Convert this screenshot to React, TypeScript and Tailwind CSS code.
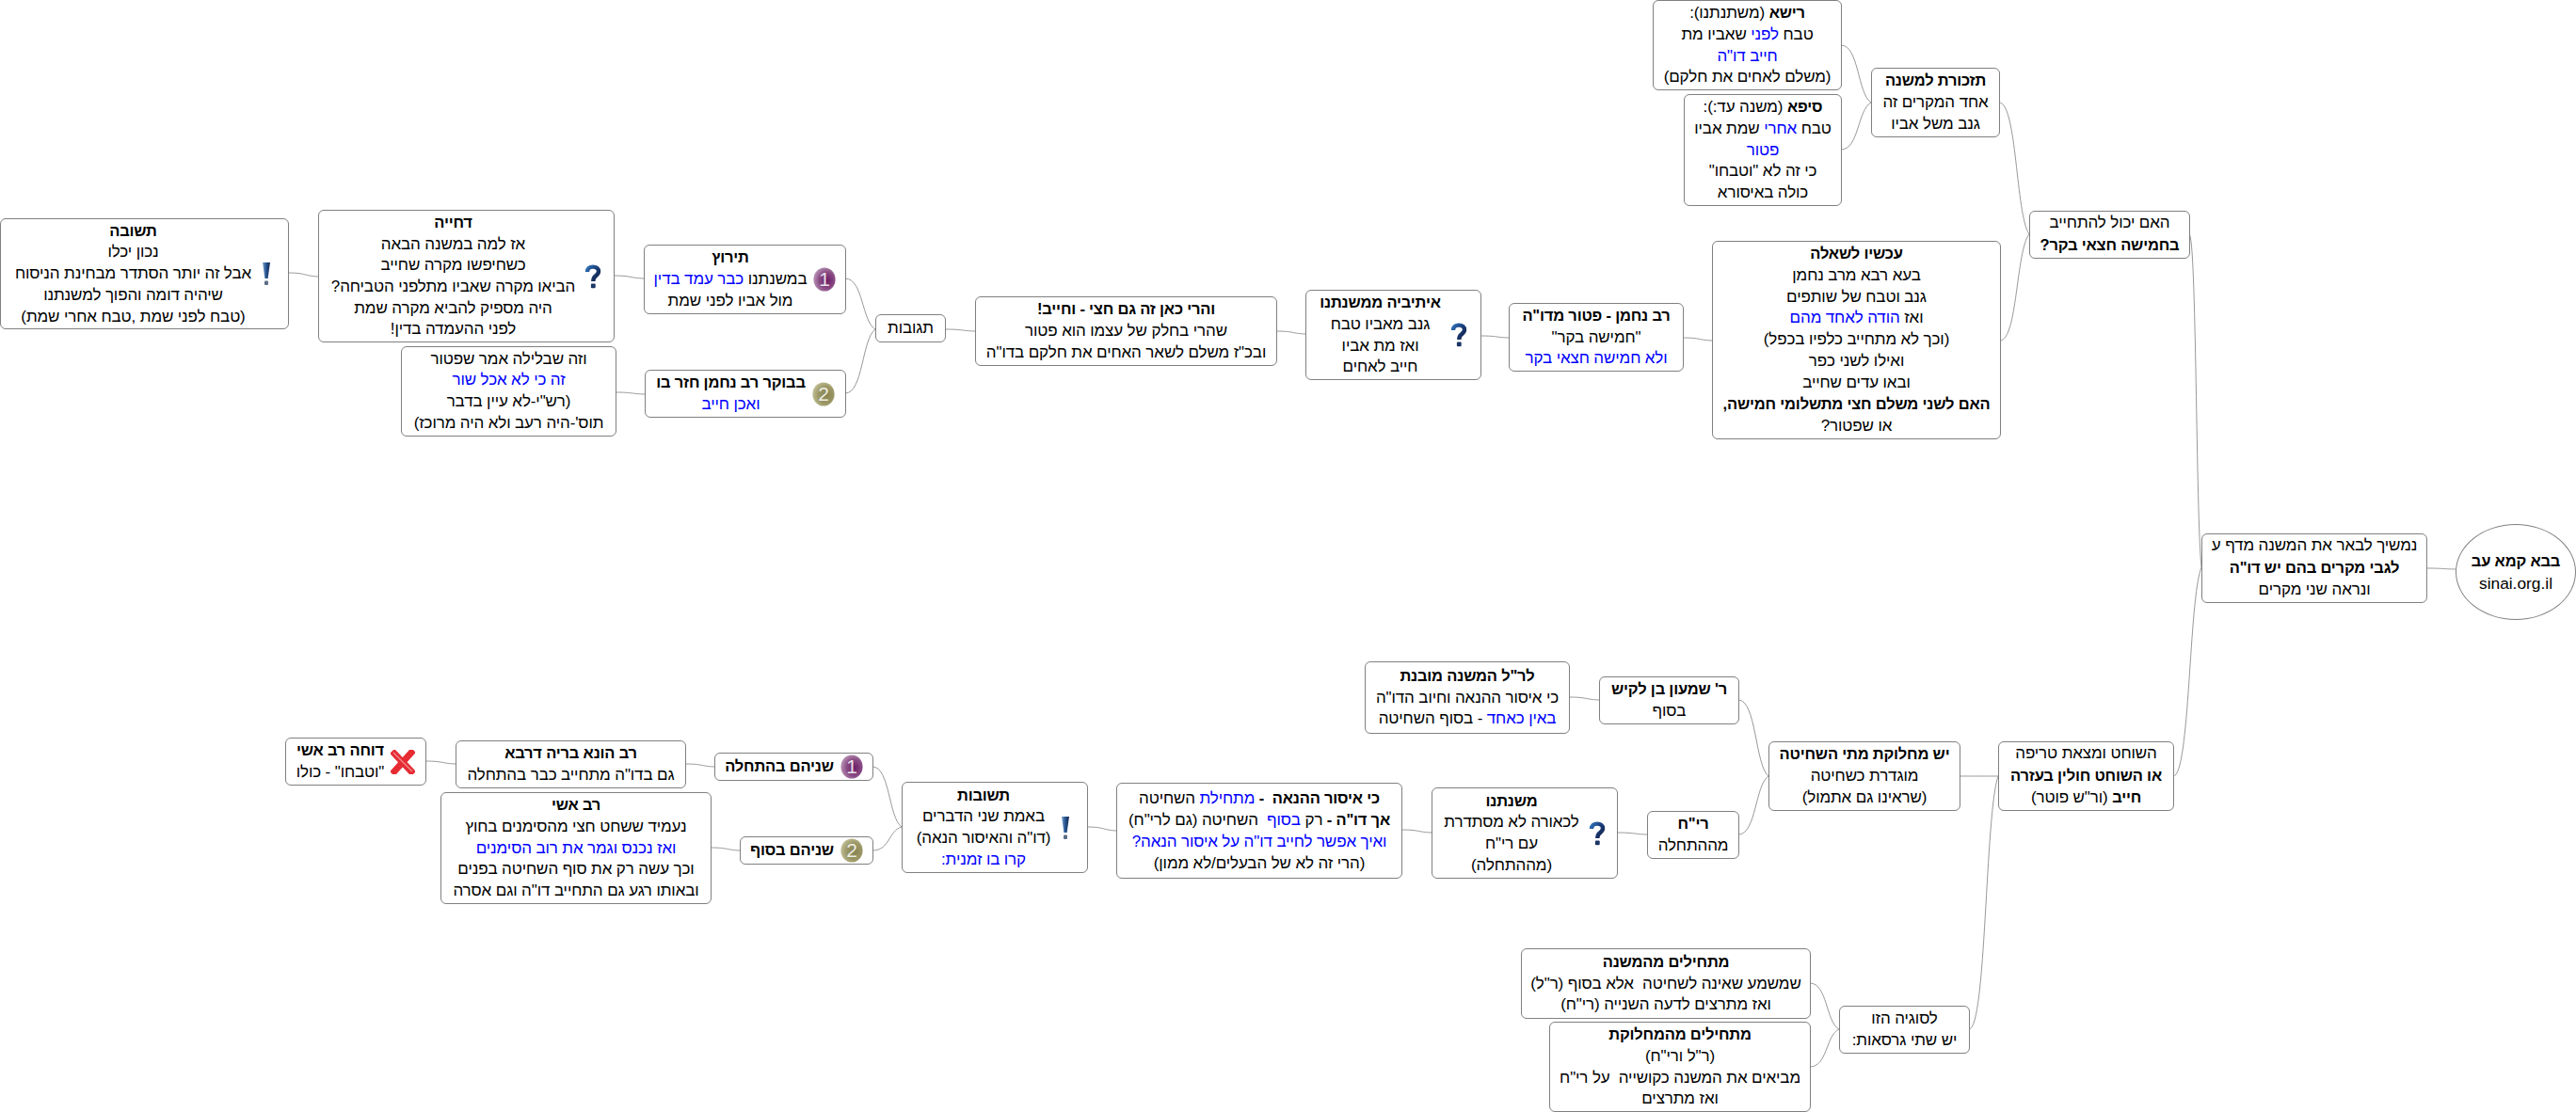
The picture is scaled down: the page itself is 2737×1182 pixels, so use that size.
import React from "react";

const B = ({ children }: { children: React.ReactNode }) => <span className="text-[16.5px] font-bold tracking-[-0.2px]">{children}</span>;
const U = ({ children }: { children: React.ReactNode }) => <span className="text-[#0000ff]">{children}</span>;

function Question() {
  return (
    <svg width="18" height="26" viewBox="0 0 18 26" className="ml-[3px] shrink-0">
      <defs>
        <linearGradient id="qg" x1="0" y1="0" x2="1" y2="1">
          <stop offset="0" stopColor="#2f6fb5" />
          <stop offset="0.45" stopColor="#1c3f7c" />
          <stop offset="1" stopColor="#101f45" />
        </linearGradient>
      </defs>
      <path d="M3 8C3 4.4 5.6 2.6 9 2.6C12.6 2.6 15 4.6 15 7.6C15 10.2 13.2 11.3 11.4 12.8C9.9 14 9.3 15 9.3 18" fill="none" stroke="url(#qg)" strokeWidth="4.4" />
      <rect x="6.9" y="20.4" width="4.8" height="4.8" rx="1" fill="#1b3566" />
    </svg>
  );
}

function Exclaim() {
  return (
    <svg width="10" height="26" viewBox="0 0 10 26" className="ml-[4px] mr-[3px] shrink-0">
      <defs>
        <linearGradient id="eg" x1="0" y1="0" x2="1" y2="0">
          <stop offset="0" stopColor="#7fa6cf" />
          <stop offset="0.5" stopColor="#24508f" />
          <stop offset="1" stopColor="#16294f" />
        </linearGradient>
      </defs>
      <path d="M1 1H9L6.6 18H3.4Z" fill="url(#eg)" />
      <rect x="3" y="20.5" width="4" height="4.5" rx="1" fill="#5c6d85" />
    </svg>
  );
}

function Badge({ n }: { n: 1 | 2 }) {
  const id = n === 1 ? "b1" : "b2";
  const c = n === 1 ? ["#6c1c66", "#8a4d85", "#b48cb0"] : ["#87834f", "#9b9767", "#bdbb90"];
  return (
    <svg width="24" height="26" viewBox="0 0 24 26" className="shrink-0">
      <defs>
        <radialGradient id={id} cx="0.62" cy="0.55" r="0.6">
          <stop offset="0" stopColor={c[0]} />
          <stop offset="0.6" stopColor={c[1]} />
          <stop offset="1" stopColor={c[2]} />
        </radialGradient>
      </defs>
      <ellipse cx="12" cy="13" rx="11.6" ry="12.6" fill={`url(#${id})`} />
      <text x="12" y="20" textAnchor="middle" fontSize="21" fontFamily="'Liberation Sans', sans-serif" fill="#ffffff" fillOpacity="0.85">{n}</text>
    </svg>
  );
}

function Cross() {
  return (
    <svg width="26" height="26" viewBox="0 0 26 26" className="shrink-0">
      <path d="M4 4L22 23M22 3L4 23" stroke="#e62b33" strokeWidth="7" strokeLinecap="square" />
      <path d="M3 3L23 23" stroke="#f48b90" strokeWidth="1.2" />
    </svg>
  );
}

type NodeProps = { className: string; icon?: React.ReactNode; lines: React.ReactNode[] };

function MapNode({ className, icon, lines }: NodeProps) {
  return (
    <div dir="rtl" className={"absolute flex items-center justify-center gap-[7px] rounded-[6px] border border-[#808080] bg-white " + className}>
      {icon}
      <div className="flex flex-col items-center">
        {lines.map((l, i) => (
          <div key={i} className="whitespace-pre text-center">{l}</div>
        ))}
      </div>
    </div>
  );
}

const links: [number, number, number, number][] = [
  [2578, 604, 2609, 605],
  [2326, 249, 2339, 603],
  [2309, 825, 2339, 603],
  [2124, 109, 2156, 249],
  [2125, 362, 2156, 249],
  [1956, 48, 1988, 109],
  [1956, 159, 1988, 109],
  [1788, 359, 1819, 362],
  [1573, 357, 1603, 359],
  [1356, 352, 1387, 355],
  [1004, 350, 1036, 352],
  [898, 296, 930, 350],
  [898, 418, 930, 350],
  [652, 293, 684, 296],
  [306, 290, 338, 294],
  [654, 417, 685, 419],
  [2082, 825, 2123, 825],
  [2092, 1094, 2123, 825],
  [1847, 744, 1879, 825],
  [1847, 887, 1879, 825],
  [1667, 741, 1699, 744],
  [1718, 885, 1750, 887],
  [1489, 882, 1521, 885],
  [1155, 879, 1186, 883],
  [927, 815, 958, 879],
  [927, 904, 958, 879],
  [728, 812, 759, 815],
  [755, 901, 786, 904],
  [452, 809, 484, 812],
  [1923, 1045, 1954, 1094],
  [1923, 1134, 1954, 1094],
];

function curve([x1, y1, x2, y2]: [number, number, number, number]) {
  const dx = x2 - x1;
  const dy = y2 - y1;
  return `M${x1} ${y1}C${x1 + dx * 0.6} ${y1} ${x1 + dx * 0.55} ${y1 + dy * 0.85} ${x2} ${y2}`;
}

export default function App() {
  return (
    <div className="relative h-[1182px] w-[2737px] overflow-hidden bg-white font-['Liberation_Sans',Arial,sans-serif] text-[17px] leading-[22.67px] tracking-[-0.12px] text-black">
      <svg className="absolute left-0 top-0" width="2737" height="1182" fill="none">
        {links.map((l, i) => (
          <path key={i} d={curve(l)} stroke="#999999" strokeWidth="1" />
        ))}
      </svg>

      <div className="absolute left-[2609px] top-[557px] flex h-[102px] w-[128px] flex-col items-center justify-center rounded-[50%] border border-[#808080] bg-white">
        <div dir="rtl"><B>בבא קמא עב</B></div>
        <div className="text-[17.33px] tracking-normal">sinai.org.il</div>
      </div>

      <MapNode className="left-[2339px] top-[567px] h-[74px] w-[240px]" lines={["נמשיך לבאר את המשנה מדף ע", <B>לגבי מקרים בהם יש דו"ה</B>, "ונראה שני מקרים"]} />
      <MapNode className="left-[2156px] top-[224px] h-[51px] w-[171px]" lines={["האם יכול להתחייב", <B>בחמישה חצאי בקר?</B>]} />
      <MapNode className="left-[1988px] top-[72px] h-[74px] w-[137px]" lines={[<B>תזכורת למשנה</B>, "אחד המקרים זה", "גנב משל אביו"]} />
      <MapNode className="left-[1756px] top-0 h-[96px] w-[201px]" lines={[<><B>רישא</B> (משתנתנו):</>, <>טבח <U>לפני</U> שאביו מת</>, <U>חייב דו"ה</U>, "(משלם לאחים את חלקם)"]} />
      <MapNode className="left-[1789px] top-[100px] h-[119px] w-[168px]" lines={[<><B>סיפא</B> (משנה עד:):</>, <>טבח <U>אחרי</U> שמת אביו</>, <U>פטור</U>, 'כי זה לא "וטבחו"', "כולה באיסורא"]} />
      <MapNode className="left-[1819px] top-[256px] h-[211px] w-[307px]" lines={[<B>עכשיו לשאלה</B>, "בעא רבא מרב נחמן", "גנב וטבח של שותפים", <>ואז <U>הודה לאחד מהם</U></>, "(וכך לא מתחייב כלפיו בכפל)", "ואילו לשני כפר", "ובאו עדים שחייב", <B>האם לשני משלם חצי מתשלומי חמישה,</B>, "או שפטור?"]} />
      <MapNode className="left-[1603px] top-[322px] h-[73px] w-[186px]" lines={[<B>רב נחמן - פטור מדו"ה</B>, '"חמישה בקר"', <U>ולא חמישה חצאי בקר</U>]} />
      <MapNode className="left-[1387px] top-[308px] h-[96px] w-[187px]" icon={<Question />} lines={[<B>איתיביה ממשנתנו</B>, "גנב מאביו טבח", "ואז מת אביו", "חייב לאחים"]} />
      <MapNode className="left-[1036px] top-[315px] h-[74px] w-[321px]" lines={[<B>והרי כאן זה גם חצי - וחייב!</B>, "שהרי בחלק של עצמו הוא פטור", 'ובכ"ז משלם לשאר האחים את חלקם בדו"ה']} />
      <MapNode className="left-[930px] top-[334px] h-[30px] w-[75px]" lines={["תגובות"]} />
      <MapNode className="left-[684px] top-[260px] h-[74px] w-[215px]" icon={<Badge n={1} />} lines={[<B>תירוץ</B>, <>במשנתנו <U>כבר עמד בדין</U></>, "מול אביו לפני שמת"]} />
      <MapNode className="left-[685px] top-[393px] h-[51px] w-[214px]" icon={<Badge n={2} />} lines={[<B>בבוקר רב נחמן חזר בו</B>, <U>ואכן חייב</U>]} />
      <MapNode className="left-[338px] top-[223px] h-[141px] w-[315px]" icon={<Question />} lines={[<B>דחייה</B>, "אז למה במשנה הבאה", "כשחיפשו מקרה שחייב", "הביאו מקרה שאביו מתלפני הטביחה?", "היה מספיק להביא מקרה שמת", "לפני ההעמדה בדין!"]} />
      <MapNode className="left-[426px] top-[368px] h-[96px] w-[229px]" lines={["וזה שבלילה אמר שפטור", <U>זה כי לא אכל שור</U>, '(רש"י-לא עיין בדבר', "תוס'-היה רעב ולא היה מרוכז)"]} />
      <MapNode className="left-0 top-[232px] h-[118px] w-[307px]" icon={<Exclaim />} lines={[<B>תשובה</B>, "נכון יכלו", "אבל זה יותר הסתדר מבחינת הניסוח", "שיהיה דומה והפוך למשנתנו", "(טבח לפני שמת ,טבח אחרי שמת)"]} />

      <MapNode className="left-[2123px] top-[788px] h-[74px] w-[187px]" lines={["השוחט ומצאת טריפה", <B>או השוחט חולין בעזרה</B>, <><B>חייב</B> (ור"ש פוטר)</>]} />
      <MapNode className="left-[1879px] top-[788px] h-[74px] w-[204px]" lines={[<B>יש מחלוקת מתי השחיטה</B>, "מוגדרת כשחיטה", "(שראינו גם אתמול)"]} />
      <MapNode className="left-[1699px] top-[719px] h-[51px] w-[149px]" lines={[<B>ר' שמעון בן לקיש</B>, "בסוף"]} />
      <MapNode className="left-[1450px] top-[703px] h-[77px] w-[218px]" lines={[<B>לר"ל המשנה מובנת</B>, 'כי איסור ההנאה וחיוב הדו"ה', <><U>באין כאחד</U> - בסוף השחיטה</>]} />
      <MapNode className="left-[1750px] top-[862px] h-[51px] w-[98px]" lines={[<B>רי"ח</B>, "מההתחלה"]} />
      <MapNode className="left-[1521px] top-[837px] h-[97px] w-[198px]" icon={<Question />} lines={[<B>משנתנו</B>, "לכאורה לא מסתדרת", 'עם רי"ח', "(מההתחלה)"]} />
      <MapNode className="left-[1186px] top-[832px] h-[102px] w-[304px]" lines={[<><B>כי איסור ההנאה  - </B><U>מתחילת</U> השחיטה</>, <><B>אך דו"ה - </B>רק <U>בסוף</U>  השחיטה (גם לרי"ח)</>, <U>ואיך אפשר לחייב דו"ה על איסור הנאה?</U>, "(הרי זה לא של הבעלים/לא ממון)"]} />
      <MapNode className="left-[958px] top-[831px] h-[97px] w-[198px]" icon={<Exclaim />} lines={[<B>תשובות</B>, "באמת שני הדברים", '(דו"ה והאיסור הנאה)', <U>קרו בו זמנית:</U>]} />
      <MapNode className="left-[759px] top-[800px] h-[30px] w-[169px]" icon={<Badge n={1} />} lines={[<B>שניהם בהתחלה</B>]} />
      <MapNode className="left-[786px] top-[889px] h-[30px] w-[142px]" icon={<Badge n={2} />} lines={[<B>שניהם בסוף</B>]} />
      <MapNode className="left-[484px] top-[787px] h-[51px] w-[245px]" lines={[<B>רב הונא בריה דרבא</B>, 'גם בדו"ה מתחייב כבר בהתחלה']} />
      <MapNode className="left-[303px] top-[784px] h-[51px] w-[150px]" icon={<Cross />} lines={[<B>דוחה רב אשי</B>, '"וטבחו" - כולו']} />
      <MapNode className="left-[468px] top-[842px] h-[119px] w-[288px]" lines={[<B>רב אשי</B>, "נעמיד ששחט חצי מהסימנים בחוץ", <U>ואז נכנס וגמר את רוב הסימנים</U>, "וכך עשה רק את סוף השחיטה בפנים", 'ובאותו רגע גם התחייב דו"ה וגם אסרה']} />

      <MapNode className="left-[1954px] top-[1069px] h-[51px] w-[139px]" lines={["לסוגיה הזו", "יש שתי גרסאות:"]} />
      <MapNode className="left-[1616px] top-[1008px] h-[75px] w-[308px]" lines={[<B>מתחילים מהמשנה</B>, 'שמשמע שאינה לשחיטה  אלא בסוף (ר"ל)', 'ואז מתרצים לדעה השנייה (רי"ח)']} />
      <MapNode className="left-[1646px] top-[1086px] h-[96px] w-[278px]" lines={[<B>מתחילים מהמחלוקת</B>, '(ר"ל ורי"ח)', 'מביאים את המשנה כקושייה  על רי"ח', "ואז מתרצים"]} />
    </div>
  );
}
